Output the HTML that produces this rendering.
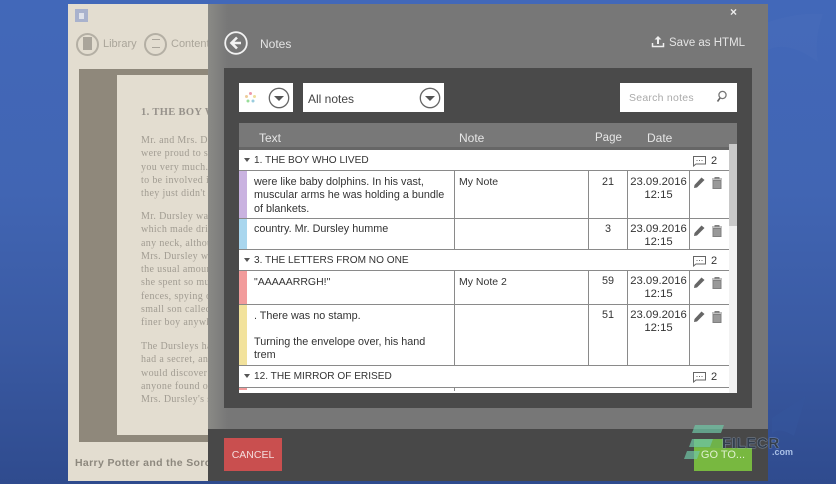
<!DOCTYPE html>
<html><head><meta charset="utf-8">
<style>
html,body{margin:0;padding:0}
body{width:836px;height:484px;overflow:hidden;position:relative;font-family:"Liberation Sans",sans-serif;background:#3f63ad}
div,span,svg{position:absolute;white-space:nowrap}
.bk{font:10px/13.250px "Liberation Serif",serif;color:#a19c92;letter-spacing:.35px}
.t{font-size:10.800px;line-height:13px;color:#333}
.d{font-size:11.300px}
.h{font-size:12px;line-height:14px;color:#e6e6e6;top:131px}
.g{left:254px;font-size:10.100px;line-height:12px;color:#333}
.ln{background:#8a8a8a}
.c{text-align:center}
.tri{width:0;height:0;border-left:3.500px solid transparent;border-right:3.500px solid transparent;border-top:4px solid #555;left:244px}
</style></head><body>
<div style="left:0;top:0;width:836px;height:484px;background:linear-gradient(180deg,#4268b9 0%,#4165b3 40%,#3a5aa3 70%,#2f4b8e 100%)"></div>
<svg style="left:768px;top:0" width="68" height="484"><path d="M0 22 Q30 12 55 14 Q46 40 50 62 Q20 40 0 50Z" fill="#4a6dba" opacity=".45"/><path d="M4 418 L38 396 L26 436 Q10 426 4 434Z" fill="#35569d" opacity=".45"/></svg>

<!-- window left -->
<div style="left:68px;top:4px;width:140px;height:477px;background:#e3ddd0"></div>
<div style="left:75px;top:9px;width:13px;height:13px;background:#a9b2cd"></div>
<div style="left:79px;top:13px;width:5px;height:6px;background:#dfe2ea"></div>
<div style="left:76px;top:33px;width:19px;height:19px;border:2px solid #b4afa4;border-radius:50%"></div>
<div style="left:83px;top:37px;width:9px;height:13px;background:#aaa59b"></div>
<div style="left:103px;top:38px;font-size:11px;color:#aaa59a">Library</div>
<div style="left:144px;top:33px;width:19px;height:19px;border:2px solid #b4afa4;border-radius:50%"></div>
<div style="left:152px;top:39px;width:8px;height:7px;border-top:1px solid #aaa59b;border-bottom:1px solid #aaa59b"></div>
<div style="left:171px;top:38px;font-size:11px;color:#aaa59a">Contents</div>
<div style="left:79px;top:69px;width:129px;height:373px;background:#8f887b"></div>
<div style="left:117px;top:75px;width:91px;height:360px;background:#e3ddd0"></div>
<div style="left:117px;top:75px;width:91px;height:360px;overflow:hidden">
<div class="bk" style="left:24px;top:31px;font-weight:bold;font-size:10.500px;color:#96918a">1. THE BOY WHO LIVED</div>
<div class="bk" style="left:24px;top:59px">Mr. and Mrs. Dursley,<br>were proud to say<br>you very much. They<br>to be involved in<br>they just didn't hold</div>
<div class="bk" style="left:24px;top:135px">Mr. Dursley was the<br>which made drills.<br>any neck, although<br>Mrs. Dursley was<br>the usual amount of<br>she spent so much<br>fences, spying on<br>small son called<br>finer boy anywhere</div>
<div class="bk" style="left:24px;top:265px">The Dursleys had<br>had a secret, and<br>would discover it.<br>anyone found out<br>Mrs. Dursley's sister</div>
</div>
<div style="left:75px;top:457px;font-size:10.500px;font-weight:bold;color:#8d887e;letter-spacing:.35px;width:133px;overflow:hidden">Harry Potter and the Sorcerer</div>

<!-- dialog -->
<div style="left:208px;top:4px;width:560px;height:425px;background:#777"></div>
<div style="left:208px;top:4px;width:20px;height:425px;background:linear-gradient(90deg,#8a8a86,#777)"></div>
<div style="left:208px;top:429px;width:560px;height:52px;background:#484848"></div>
<svg style="left:224px;top:31px" width="24" height="24" viewBox="0 0 24 24"><circle cx="12" cy="12" r="10.800" fill="none" stroke="#f2f2f2" stroke-width="1.800"/><path d="M13 6.500 7.500 12l5.500 5.500M8 12h9" fill="none" stroke="#f2f2f2" stroke-width="2.600"/></svg>
<div style="left:260px;top:37px;font-size:12px;color:#e4e4e4">Notes</div>
<div style="left:730px;top:5px;font-size:12px;font-weight:bold;color:#eee">×</div>
<svg style="left:651px;top:35px" width="14" height="13" viewBox="0 0 14 13"><path d="M7 1 3.500 4.500H6V9H8V4.500H10.500Z" fill="#eee"/><path d="M1.500 8V11.500H12.500V8" fill="none" stroke="#eee" stroke-width="1.500"/></svg>
<div style="left:669px;top:37px;font-size:11.500px;color:#e4e4e4">Save as HTML</div>

<div style="left:224px;top:68px;width:528px;height:340px;background:#4a4a4a"></div>

<!-- toolbar -->
<div style="left:239px;top:83px;width:54px;height:29px;background:#fff"></div>
<svg style="left:244px;top:91px" width="13" height="13" viewBox="0 0 13 13"><circle cx="6.500" cy="2.500" r="1.500" fill="#e9a"/><circle cx="10.500" cy="5.500" r="1.500" fill="#ed9"/><circle cx="9" cy="10" r="1.500" fill="#9cd"/><circle cx="4" cy="10" r="1.500" fill="#9d9"/><circle cx="2.500" cy="5.500" r="1.500" fill="#ec9"/></svg>
<svg style="left:268px;top:87px" width="22" height="22" viewBox="0 0 22 22"><circle cx="11" cy="11" r="9.700" fill="#fff" stroke="#666" stroke-width="1.300"/><path d="M6 9H16L11 14Z" fill="#555"/></svg>
<div style="left:303px;top:83px;width:141px;height:29px;background:#fff"></div>
<div style="left:308px;top:92px;font-size:12px;color:#444">All notes</div>
<svg style="left:419px;top:87px" width="22" height="22" viewBox="0 0 22 22"><circle cx="11" cy="11" r="9.700" fill="#fff" stroke="#666" stroke-width="1.300"/><path d="M6 9H16L11 14Z" fill="#555"/></svg>
<div style="left:620px;top:83px;width:117px;height:29px;background:#fff"></div>
<div style="left:629px;top:92px;font-size:10.500px;color:#aaa;letter-spacing:.25px">Search notes</div>
<svg style="left:715px;top:90px" width="13" height="13" viewBox="0 0 13 13"><circle cx="7.500" cy="5" r="3.600" fill="none" stroke="#777" stroke-width="1.300"/><path d="M5 8 2.500 11.500" stroke="#666" stroke-width="1.600"/></svg>

<!-- table -->
<div style="left:239px;top:123px;width:498px;height:27px;background:#787878"></div>
<div style="left:239px;top:147px;width:498px;height:3px;background:#666"></div>
<div class="h" style="left:259px">Text</div>
<div class="h" style="left:459px">Note</div>
<div class="h" style="left:595px;font-size:11.500px">Page</div>
<div class="h" style="left:647px">Date</div>
<div style="left:239px;top:150px;width:498px;height:243px;background:#fff"></div>
<div style="left:729px;top:144px;width:8px;height:82px;background:#c9c9c9"></div>
<div style="left:729px;top:226px;width:8px;height:167px;background:#f2f2f2"></div>

<!-- stripes -->
<div style="left:239px;top:171px;width:8px;height:47px;background:#c9b2e0"></div>
<div style="left:239px;top:219px;width:8px;height:30px;background:#a9d6ee"></div>
<div style="left:239px;top:271px;width:8px;height:33px;background:#f29c9c"></div>
<div style="left:239px;top:305px;width:8px;height:60px;background:#f2e29c"></div>
<div style="left:239px;top:388px;width:8px;height:2px;background:#f29c9c"></div>

<!-- horizontal lines -->
<div class="ln" style="left:239px;top:170px;width:490px;height:1px"></div>
<div class="ln" style="left:239px;top:218px;width:490px;height:1px"></div>
<div class="ln" style="left:239px;top:249px;width:490px;height:1px"></div>
<div class="ln" style="left:239px;top:270px;width:490px;height:1px"></div>
<div class="ln" style="left:239px;top:304px;width:490px;height:1px"></div>
<div class="ln" style="left:239px;top:365px;width:490px;height:1px"></div>
<div class="ln" style="left:239px;top:387px;width:490px;height:1px"></div>

<!-- vertical lines -->
<div class="ln" style="left:454px;top:171px;width:1px;height:78px"></div>
<div class="ln" style="left:588px;top:171px;width:1px;height:78px"></div>
<div class="ln" style="left:627px;top:171px;width:1px;height:78px"></div>
<div class="ln" style="left:689px;top:171px;width:1px;height:78px"></div>
<div class="ln" style="left:454px;top:271px;width:1px;height:94px"></div>
<div class="ln" style="left:588px;top:271px;width:1px;height:94px"></div>
<div class="ln" style="left:627px;top:271px;width:1px;height:94px"></div>
<div class="ln" style="left:689px;top:271px;width:1px;height:94px"></div>
<div class="ln" style="left:454px;top:388px;width:1px;height:3px"></div>

<!-- groups -->
<div class="tri" style="top:158px"></div><div class="g" style="top:155px">1. THE BOY WHO LIVED</div>
<div class="tri" style="top:258px"></div><div class="g" style="top:255px">3. THE LETTERS FROM NO ONE</div>
<div class="tri" style="top:374px"></div><div class="g" style="top:371px">12. THE MIRROR OF ERISED</div>

<!-- comment icons -->
<svg style="left:693px;top:156px" width="13" height="11" viewBox="0 0 13 11"><path d="M.5 .5H12.500V8H3L.5 10Z" fill="none" stroke="#666"/><path d="M3.500 4.500h1M6 4.500h1M8.500 4.500h1" stroke="#666"/></svg>
<div style="left:711px;top:155px;font-size:11px;color:#333">2</div>
<svg style="left:693px;top:256px" width="13" height="11" viewBox="0 0 13 11"><path d="M.5 .5H12.500V8H3L.5 10Z" fill="none" stroke="#666"/><path d="M3.500 4.500h1M6 4.500h1M8.500 4.500h1" stroke="#666"/></svg>
<div style="left:711px;top:255px;font-size:11px;color:#333">2</div>
<svg style="left:693px;top:372px" width="13" height="11" viewBox="0 0 13 11"><path d="M.5 .5H12.500V8H3L.5 10Z" fill="none" stroke="#666"/><path d="M3.500 4.500h1M6 4.500h1M8.500 4.500h1" stroke="#666"/></svg>
<div style="left:711px;top:371px;font-size:11px;color:#333">2</div>

<!-- row text -->
<div class="t" style="left:254px;top:176px;line-height:13.300px">were like baby dolphins. In his vast,<br>muscular arms he was holding a bundle<br>of blankets.</div>
<div class="t" style="left:459px;top:176px;font-size:10.500px">My Note</div>
<div class="t c" style="left:589px;top:176px;width:38px">21</div>
<div class="t c d" style="left:628px;top:176px;width:61px;line-height:13px">23.09.2016<br>12:15</div>

<div class="t" style="left:254px;top:223px">country. Mr. Dursley humme</div>
<div class="t c" style="left:589px;top:223px;width:38px">3</div>
<div class="t c d" style="left:628px;top:223px;width:61px;line-height:13px">23.09.2016<br>12:15</div>

<div class="t" style="left:254px;top:276px;font-size:10.500px">"AAAAARRGH!"</div>
<div class="t" style="left:459px;top:276px;font-size:10.500px">My Note 2</div>
<div class="t c" style="left:589px;top:275px;width:38px">59</div>
<div class="t c d" style="left:628px;top:275px;width:61px;line-height:13px">23.09.2016<br>12:15</div>

<div class="t" style="left:254px;top:310px;line-height:13px">. There was no stamp.<br><br>Turning the envelope over, his hand<br>trem</div>
<div class="t c" style="left:589px;top:309px;width:38px">51</div>
<div class="t c d" style="left:628px;top:309px;width:61px;line-height:13px">23.09.2016<br>12:15</div>

<!-- action icons -->
<svg style="left:693px;top:176px" width="32" height="13" viewBox="0 0 32 13"><path d="M1 12 1.500 9 8.500 1.500 11.500 4 4 11.500Z" fill="#666"/><path d="M19 3H29M22 3V1.500H26V3M20 4.500H28V12.500H20Z" fill="#999" stroke="#808080"/></svg>
<svg style="left:693px;top:224px" width="32" height="13" viewBox="0 0 32 13"><path d="M1 12 1.500 9 8.500 1.500 11.500 4 4 11.500Z" fill="#666"/><path d="M19 3H29M22 3V1.500H26V3M20 4.500H28V12.500H20Z" fill="#999" stroke="#808080"/></svg>
<svg style="left:693px;top:276px" width="32" height="13" viewBox="0 0 32 13"><path d="M1 12 1.500 9 8.500 1.500 11.500 4 4 11.500Z" fill="#666"/><path d="M19 3H29M22 3V1.500H26V3M20 4.500H28V12.500H20Z" fill="#999" stroke="#808080"/></svg>
<svg style="left:693px;top:310px" width="32" height="13" viewBox="0 0 32 13"><path d="M1 12 1.500 9 8.500 1.500 11.500 4 4 11.500Z" fill="#666"/><path d="M19 3H29M22 3V1.500H26V3M20 4.500H28V12.500H20Z" fill="#999" stroke="#808080"/></svg>

<!-- footer -->
<div style="left:224px;top:438px;width:58px;height:33px;background:#c94f4f"></div>
<div class="c" style="left:224px;top:449px;width:58px;font-size:10.500px;color:#f3dcdc">CANCEL</div>
<div style="left:694px;top:448px;width:58px;height:23px;background:#78b840"></div>
<div style="left:694px;top:439px;width:30px;height:9px;background:#6fb24a"></div>
<div class="c" style="left:698px;top:449px;width:50px;font-size:11px;color:#dff0cf">GO TO...</div>

<!-- watermark -->
<svg style="left:684px;top:424px" width="42" height="36" viewBox="0 0 42 36"><path d="M11 1H40L37 9H8ZM8 15H29L26 23H5ZM3 27H16L13 35H0Z" fill="#6fc6a5" opacity=".7"/></svg>
<div style="left:722px;top:435px;font-size:15px;font-weight:bold;color:#333e4c;letter-spacing:.6px;text-shadow:0 0 1px #a9bde0,0 0 1px #a9bde0">FILECR</div>
<div style="left:772px;top:447px;font-size:9px;font-weight:bold;color:#a9c0e6">.com</div>
</body></html>
